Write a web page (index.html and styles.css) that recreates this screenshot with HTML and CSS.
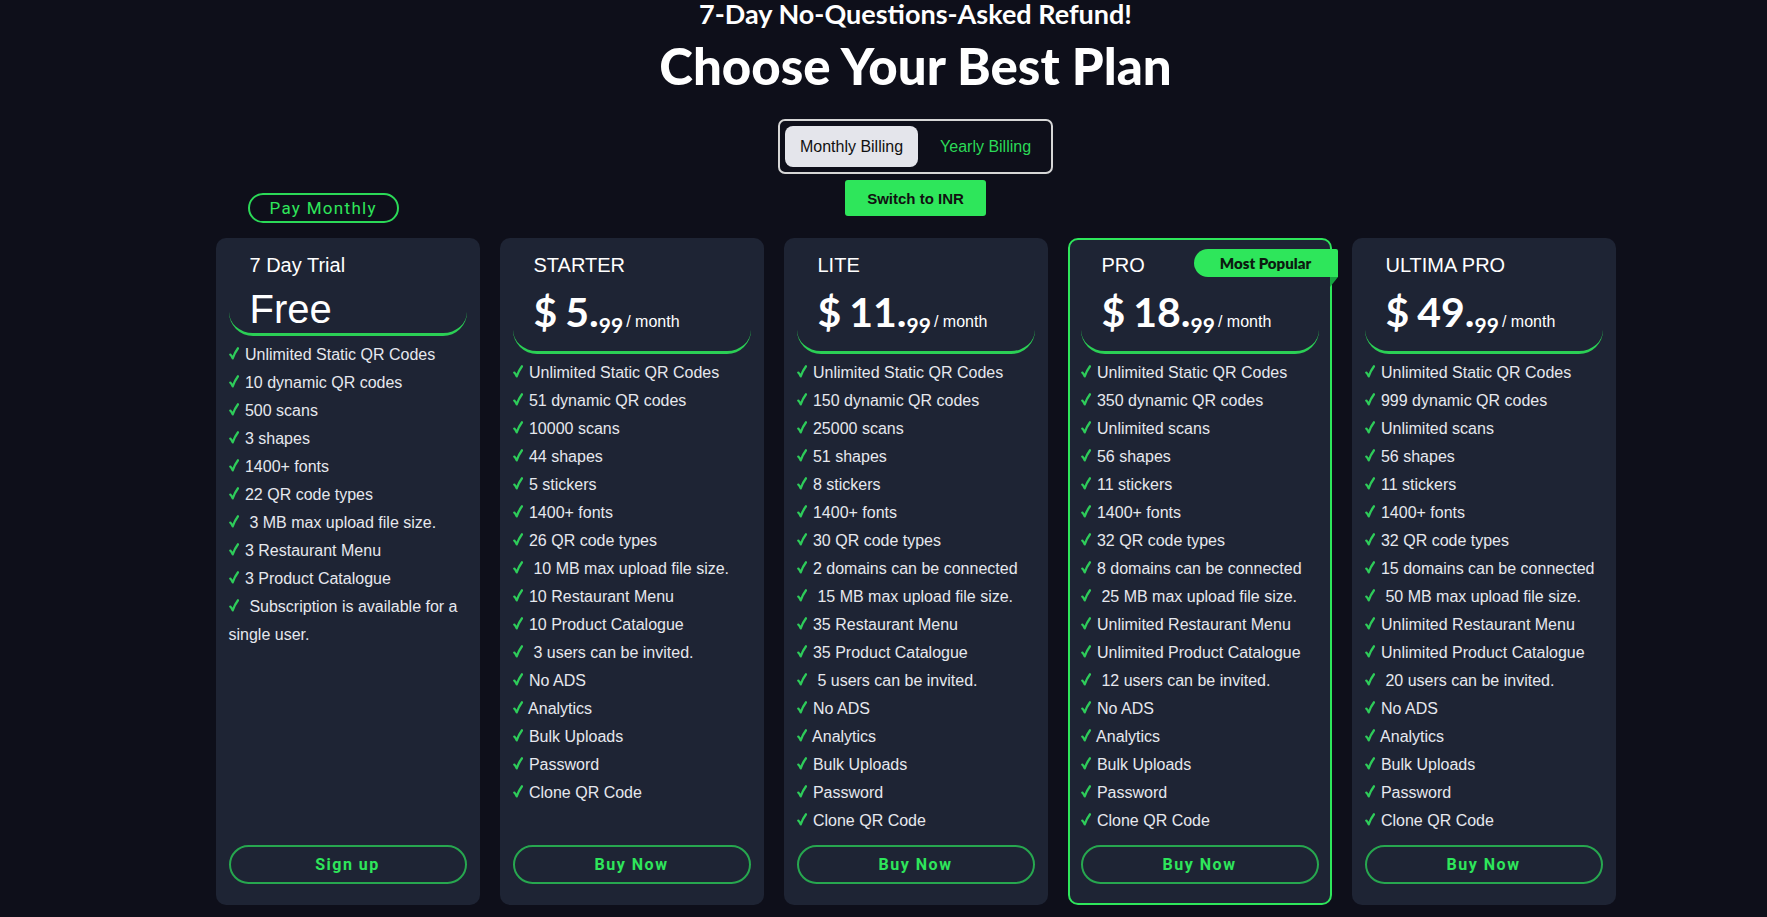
FILE: index.html
```html
<!DOCTYPE html>
<html lang="en">
<head>
    <meta charset="UTF-8">
    <meta name="viewport" content="width=device-width, initial-scale=1.0">
    <title>Choose Your Best Plan</title>
    <link rel="stylesheet" href="styles.css">
</head>
<body>
    <svg class="defs" aria-hidden="true">
        <symbol id="tick" viewBox="0 0 10 13">
            <path d="M1.3 7.6C2.2 8.6 3 9.8 3.7 11.4 5 7.6 6.8 4.2 9 1.3" fill="none" stroke="currentColor" stroke-width="2.3" stroke-linecap="round" stroke-linejoin="round"/>
        </symbol>
    </svg>
    <main class="pricing">
        <p class="refund">7-Day No-Questions-Asked Refund!</p>
        <h1 class="title">Choose Your Best Plan</h1>
        <div class="billing-toggle">
            <button type="button" class="billing-option active">Monthly Billing</button>
            <button type="button" class="billing-option">Yearly Billing</button>
        </div>
        <div class="currency-row">
            <span class="pay-tag">Pay Monthly</span>
            <button type="button" class="currency-btn">Switch to INR</button>
        </div>

        <div class="plans">
            <!-- trial -->
            <div class="plan">
                <div class="plan-head free-head">
                    <div class="plan-name">7 Day Trial</div>
                    <div class="plan-free">Free</div>
                </div>
                <ul class="features">
                    <li><svg class="tick"><use href="#tick"/></svg> Unlimited Static QR Codes</li>
                    <li><svg class="tick"><use href="#tick"/></svg> 10 dynamic QR codes</li>
                    <li><svg class="tick"><use href="#tick"/></svg> 500 scans</li>
                    <li><svg class="tick"><use href="#tick"/></svg> 3 shapes</li>
                    <li><svg class="tick"><use href="#tick"/></svg> 1400+ fonts</li>
                    <li><svg class="tick"><use href="#tick"/></svg> 22 QR code types</li>
                    <li><svg class="tick"><use href="#tick"/></svg>&nbsp; 3 MB max upload file size.</li>
                    <li><svg class="tick"><use href="#tick"/></svg> 3 Restaurant Menu</li>
                    <li><svg class="tick"><use href="#tick"/></svg> 3 Product Catalogue</li>
                    <li><svg class="tick"><use href="#tick"/></svg>&nbsp; Subscription is available for a single user.</li>
                </ul>
                <button type="button" class="plan-btn">Sign up</button>
            </div>

            <!-- starter -->
            <div class="plan">
                <div class="plan-head">
                    <div class="plan-name">STARTER</div>
                    <div class="plan-price"><span class="currency">$</span>5.<span class="cents">99</span><span class="period">/ month</span></div>
                </div>
                <ul class="features">
                    <li><svg class="tick"><use href="#tick"/></svg> Unlimited Static QR Codes</li>
                    <li><svg class="tick"><use href="#tick"/></svg> 51 dynamic QR codes</li>
                    <li><svg class="tick"><use href="#tick"/></svg> 10000 scans</li>
                    <li><svg class="tick"><use href="#tick"/></svg> 44 shapes</li>
                    <li><svg class="tick"><use href="#tick"/></svg> 5 stickers</li>
                    <li><svg class="tick"><use href="#tick"/></svg> 1400+ fonts</li>
                    <li><svg class="tick"><use href="#tick"/></svg> 26 QR code types</li>
                    <li><svg class="tick"><use href="#tick"/></svg>&nbsp; 10 MB max upload file size.</li>
                    <li><svg class="tick"><use href="#tick"/></svg> 10 Restaurant Menu</li>
                    <li><svg class="tick"><use href="#tick"/></svg> 10 Product Catalogue</li>
                    <li><svg class="tick"><use href="#tick"/></svg>&nbsp; 3 users can be invited.</li>
                    <li><svg class="tick"><use href="#tick"/></svg> No ADS</li>
                    <li><svg class="tick"><use href="#tick"/></svg> Analytics</li>
                    <li><svg class="tick"><use href="#tick"/></svg> Bulk Uploads</li>
                    <li><svg class="tick"><use href="#tick"/></svg> Password</li>
                    <li><svg class="tick"><use href="#tick"/></svg> Clone QR Code</li>
                </ul>
                <button type="button" class="plan-btn">Buy Now</button>
            </div>

            <!-- lite -->
            <div class="plan">
                <div class="plan-head">
                    <div class="plan-name">LITE</div>
                    <div class="plan-price"><span class="currency">$</span>11.<span class="cents">99</span><span class="period">/ month</span></div>
                </div>
                <ul class="features">
                    <li><svg class="tick"><use href="#tick"/></svg> Unlimited Static QR Codes</li>
                    <li><svg class="tick"><use href="#tick"/></svg> 150 dynamic QR codes</li>
                    <li><svg class="tick"><use href="#tick"/></svg> 25000 scans</li>
                    <li><svg class="tick"><use href="#tick"/></svg> 51 shapes</li>
                    <li><svg class="tick"><use href="#tick"/></svg> 8 stickers</li>
                    <li><svg class="tick"><use href="#tick"/></svg> 1400+ fonts</li>
                    <li><svg class="tick"><use href="#tick"/></svg> 30 QR code types</li>
                    <li><svg class="tick"><use href="#tick"/></svg> 2 domains can be connected</li>
                    <li><svg class="tick"><use href="#tick"/></svg>&nbsp; 15 MB max upload file size.</li>
                    <li><svg class="tick"><use href="#tick"/></svg> 35 Restaurant Menu</li>
                    <li><svg class="tick"><use href="#tick"/></svg> 35 Product Catalogue</li>
                    <li><svg class="tick"><use href="#tick"/></svg>&nbsp; 5 users can be invited.</li>
                    <li><svg class="tick"><use href="#tick"/></svg> No ADS</li>
                    <li><svg class="tick"><use href="#tick"/></svg> Analytics</li>
                    <li><svg class="tick"><use href="#tick"/></svg> Bulk Uploads</li>
                    <li><svg class="tick"><use href="#tick"/></svg> Password</li>
                    <li><svg class="tick"><use href="#tick"/></svg> Clone QR Code</li>
                </ul>
                <button type="button" class="plan-btn">Buy Now</button>
            </div>

            <!-- pro -->
            <div class="plan popular">
                <span class="badge">Most Popular</span>
                <div class="plan-head">
                    <div class="plan-name">PRO</div>
                    <div class="plan-price"><span class="currency">$</span>18.<span class="cents">99</span><span class="period">/ month</span></div>
                </div>
                <ul class="features">
                    <li><svg class="tick"><use href="#tick"/></svg> Unlimited Static QR Codes</li>
                    <li><svg class="tick"><use href="#tick"/></svg> 350 dynamic QR codes</li>
                    <li><svg class="tick"><use href="#tick"/></svg> Unlimited scans</li>
                    <li><svg class="tick"><use href="#tick"/></svg> 56 shapes</li>
                    <li><svg class="tick"><use href="#tick"/></svg> 11 stickers</li>
                    <li><svg class="tick"><use href="#tick"/></svg> 1400+ fonts</li>
                    <li><svg class="tick"><use href="#tick"/></svg> 32 QR code types</li>
                    <li><svg class="tick"><use href="#tick"/></svg> 8 domains can be connected</li>
                    <li><svg class="tick"><use href="#tick"/></svg>&nbsp; 25 MB max upload file size.</li>
                    <li><svg class="tick"><use href="#tick"/></svg> Unlimited Restaurant Menu</li>
                    <li><svg class="tick"><use href="#tick"/></svg> Unlimited Product Catalogue</li>
                    <li><svg class="tick"><use href="#tick"/></svg>&nbsp; 12 users can be invited.</li>
                    <li><svg class="tick"><use href="#tick"/></svg> No ADS</li>
                    <li><svg class="tick"><use href="#tick"/></svg> Analytics</li>
                    <li><svg class="tick"><use href="#tick"/></svg> Bulk Uploads</li>
                    <li><svg class="tick"><use href="#tick"/></svg> Password</li>
                    <li><svg class="tick"><use href="#tick"/></svg> Clone QR Code</li>
                </ul>
                <button type="button" class="plan-btn">Buy Now</button>
            </div>

            <!-- ultima pro -->
            <div class="plan">
                <div class="plan-head">
                    <div class="plan-name">ULTIMA PRO</div>
                    <div class="plan-price"><span class="currency">$</span>49.<span class="cents">99</span><span class="period">/ month</span></div>
                </div>
                <ul class="features">
                    <li><svg class="tick"><use href="#tick"/></svg> Unlimited Static QR Codes</li>
                    <li><svg class="tick"><use href="#tick"/></svg> 999 dynamic QR codes</li>
                    <li><svg class="tick"><use href="#tick"/></svg> Unlimited scans</li>
                    <li><svg class="tick"><use href="#tick"/></svg> 56 shapes</li>
                    <li><svg class="tick"><use href="#tick"/></svg> 11 stickers</li>
                    <li><svg class="tick"><use href="#tick"/></svg> 1400+ fonts</li>
                    <li><svg class="tick"><use href="#tick"/></svg> 32 QR code types</li>
                    <li><svg class="tick"><use href="#tick"/></svg> 15 domains can be connected</li>
                    <li><svg class="tick"><use href="#tick"/></svg>&nbsp; 50 MB max upload file size.</li>
                    <li><svg class="tick"><use href="#tick"/></svg> Unlimited Restaurant Menu</li>
                    <li><svg class="tick"><use href="#tick"/></svg> Unlimited Product Catalogue</li>
                    <li><svg class="tick"><use href="#tick"/></svg>&nbsp; 20 users can be invited.</li>
                    <li><svg class="tick"><use href="#tick"/></svg> No ADS</li>
                    <li><svg class="tick"><use href="#tick"/></svg> Analytics</li>
                    <li><svg class="tick"><use href="#tick"/></svg> Bulk Uploads</li>
                    <li><svg class="tick"><use href="#tick"/></svg> Password</li>
                    <li><svg class="tick"><use href="#tick"/></svg> Clone QR Code</li>
                </ul>
                <button type="button" class="plan-btn">Buy Now</button>
            </div>
        </div>
    </main>
</body>
</html>
```

FILE: styles.css
```css
html {
    overflow: hidden;
}
body {
    margin: 0;
    padding: 0 0 0 64px;
    background: #0e0f1a;
    color: #fff;
    font-family: "Liberation Sans", Arial, sans-serif;
}
.defs {
    display: none;
}
.pricing {
    width: 1400px;
    margin: 0 auto;
}
.refund {
    margin: 0;
    text-align: center;
    font: 700 27px/28px Lato, sans-serif;
}
.title {
    margin: 8px 0 0;
    text-align: center;
    font: 900 51px/60px Lato, sans-serif;
}
.billing-toggle {
    display: flex;
    gap: 7px;
    width: fit-content;
    margin: 23px auto 0;
    padding: 5px;
    border: 2px solid #d6d6d6;
    border-radius: 7px;
}
.billing-option {
    height: 41px;
    padding: 0 15px;
    border: none;
    border-radius: 8px;
    background: none;
    color: #2bd957;
    font: 16px "Liberation Sans", Arial, sans-serif;
    cursor: pointer;
}
.billing-option.active {
    background: #e4e5eb;
    color: #111;
}
.currency-row {
    display: grid;
    grid-template-columns: 1fr auto 1fr;
    align-items: start;
    margin-top: 6px;
}
.pay-tag {
    justify-self: start;
    margin: 13px 0 0 32px;
    height: 30px;
    box-sizing: border-box;
    padding: 0 20px;
    border: 2px solid #2bd957;
    border-radius: 16px;
    color: #2ee65b;
    font: 400 17px/26px Roboto, sans-serif;
    letter-spacing: 1.3px;
}
.currency-btn {
    height: 36px;
    padding: 0 22px;
    border: none;
    border-radius: 3px;
    background: #2ee65b;
    color: #111;
    font: bold 15px "Liberation Sans", Arial, sans-serif;
    cursor: pointer;
}
.plans {
    display: grid;
    grid-template-columns: repeat(5, 1fr);
    gap: 20px;
    margin-top: 15px;
}
.plan {
    position: relative;
    display: flex;
    flex-direction: column;
    padding: 0 11px 19px;
    background: #1e2434;
    border: 2px solid transparent;
    border-radius: 10px;
}
.plan.popular {
    border-color: #2ee65b;
}
.plan-head {
    padding: 13px 21px 14px;
    border-bottom: 3px solid #2bcf55;
    border-radius: 0 0 24px 24px;
}
.plan-head.free-head {
    padding-bottom: 2px;
}
.plan-name {
    font-size: 20px;
    line-height: 24px;
}
.plan-free {
    margin-top: 10px;
    font-size: 40px;
    line-height: 44px;
}
.plan-price {
    height: 50px;
    margin-top: 10px;
    white-space: nowrap;
    font: 700 41px/50px Lato, sans-serif;
}
.currency {
    margin-right: 8px;
}
.cents {
    font-size: 21px;
    line-height: 1;
    vertical-align: -6px;
}
.period {
    margin-left: 3px;
    font: 16px/1 "Liberation Sans", Arial, sans-serif;
}
.features {
    list-style: none;
    margin: 5px 0 10px;
    padding: 0;
    color: #e6e8ee;
    font-size: 16px;
    line-height: 28px;
}
.tick {
    width: 10px;
    height: 13px;
    margin-right: 2px;
    color: #2ecc5a;
}
.plan-btn {
    margin-top: auto;
    width: 100%;
    height: 39px;
    border: 2px solid #27a74f;
    border-radius: 20px;
    background: none;
    color: #2ee65b;
    font: 700 16px Roboto, sans-serif;
    letter-spacing: 1.5px;
    cursor: pointer;
}
.badge {
    position: absolute;
    top: 9px;
    right: -8px;
    width: 144px;
    height: 28px;
    border-radius: 14px 2px 0 14px;
    background: #2ee65b;
    color: #0c1a10;
    text-align: center;
    font: 800 15px/28px Lato, sans-serif;
}
.badge::after {
    content: "";
    position: absolute;
    top: 100%;
    right: 0;
    border-top: 10px solid #17a441;
    border-right: 8px solid transparent;
}
```
